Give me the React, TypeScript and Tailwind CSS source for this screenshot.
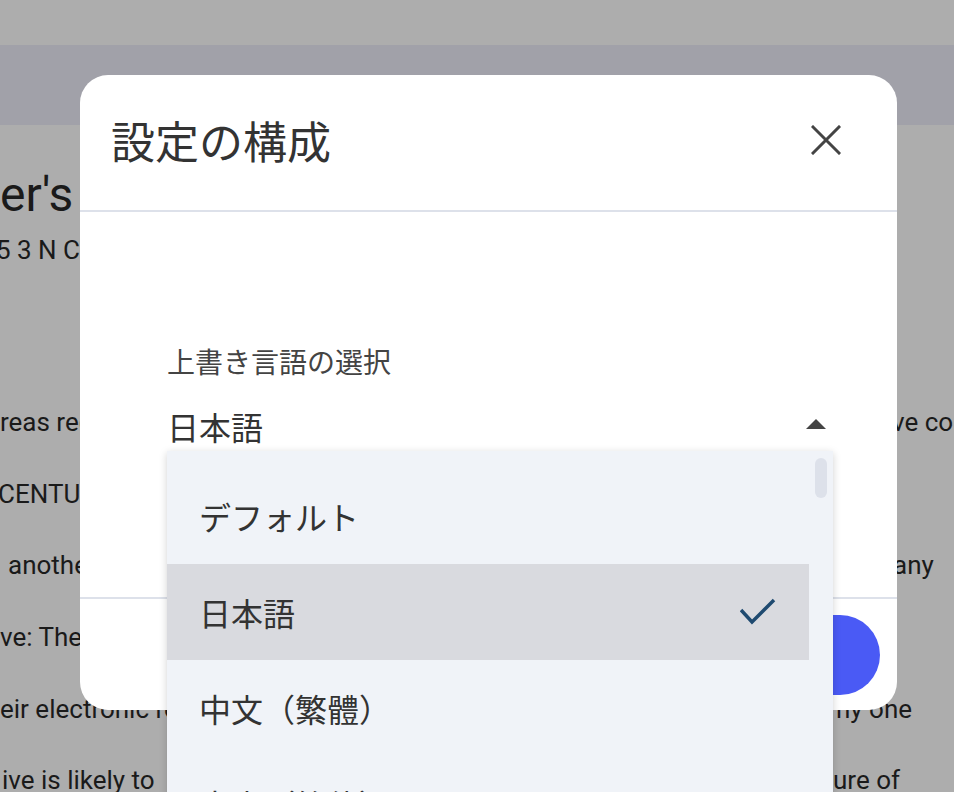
const cjk = { fontFamily: '"Noto Sans CJK JP", "Noto Sans", sans-serif' };

type Line = { left: string; leftPad?: string; rightAt?: string; right?: string };

const lines: Line[] = [
  { left: "reas requiring attention", right: "ve controls", rightAt: "w-[892px]" },
  { left: "CENTURY", leftPad: "-ml-[2px]" },
  { left: "another", leftPad: "pl-[8px]", right: "any", rightAt: "w-[893px]" },
  { left: "ve: The", },
  { left: "eir electronic records", right: "ny one", rightAt: "w-[836px]" },
  { left: "ive is likely to", leftPad: "pl-[2px]", right: "ure of", rightAt: "w-[833px]" },
];

function BackgroundPage() {
  return (
    <div className="flex flex-col text-[#1a1a1a]" style={{ fontFamily: "Roboto, Inter, sans-serif" }}>
      <div className="h-[45px] bg-[#adadad]" />
      <div className="h-[80px] bg-[#a1a1a9]" />
      <div className="flex flex-col bg-[#adadad]">
        <h1 className="mt-[42px] whitespace-nowrap text-[48px] leading-[56px]">er's</h1>
        <p className="-ml-[4px] mt-[11px] whitespace-nowrap text-[26px] leading-[32px]">5 3 N C</p>
        <div className="mt-[121px] flex flex-col">
          {lines.map((l, i) => (
            <div key={i} className="flex h-[71.6px] items-center whitespace-nowrap text-[26px]">
              <span className={`${l.rightAt ?? "w-[400px]"} shrink-0 overflow-hidden ${l.leftPad ?? ""}`}>{l.left}</span>
              {l.right && <span>{l.right}</span>}
            </div>
          ))}
        </div>
      </div>
    </div>
  );
}

function CloseIcon() {
  return (
    <svg width="30" height="30" viewBox="0 0 30 30" fill="none" stroke="#444" strokeWidth="3" strokeLinecap="square">
      <path d="M2 2 L28 28 M28 2 L2 28" />
    </svg>
  );
}

function CheckIcon() {
  return (
    <svg width="36" height="28" viewBox="0 0 36 28" fill="none" stroke="#1f4a70" strokeWidth="3.5">
      <path d="M1 12 L12 24 L34 2" />
    </svg>
  );
}

const options = ["デフォルト", "日本語", "中文（繁體）", "中文（简体）"];

function Dropdown() {
  return (
    <div className="absolute left-0 top-[45px] z-10 flex h-[400px] w-[666px] bg-[#f0f3f8] shadow-[0_2px_8px_rgba(0,0,0,0.18)]">
      <ul className="flex flex-1 flex-col pt-[17px]">
        {options.map((o) => {
          const sel = o === "日本語";
          return (
            <li
              key={o}
              className={`flex h-[96px] shrink-0 items-center justify-between pl-[32px] pr-[33px] text-[32px] text-[#333] ${sel ? "bg-[#d9dadf]" : ""}`}
            >
              <span>{o}</span>
              {sel && <CheckIcon />}
            </li>
          );
        })}
      </ul>
      <div className="w-[24px] px-[6px] pt-[7px]">
        <div className="h-[40px] rounded-full bg-[#dde1ea]" />
      </div>
    </div>
  );
}

function SettingsModal() {
  return (
    <div className="absolute left-[80px] top-[75px] flex w-[817px] flex-col rounded-[28px] bg-white" style={cjk}>
      <div className="flex h-[137px] items-center justify-between border-b-2 border-[#dde1ea] pb-[6px] pl-[31px] pr-[56px]">
        <h2 className="text-[44px] font-normal leading-none text-[#333]">設定の構成</h2>
        <CloseIcon />
      </div>
      <div className="h-[385px] pl-[87px] pr-[64px] pt-[132px]">
        <label className="block text-[28px] leading-[34px] text-[#444]">上書き言語の選択</label>
        <div className="relative mt-[28px]">
          <div className="flex h-[40px] items-center justify-between pr-[7px]">
            <span className="text-[32px] leading-[40px] text-[#333]">日本語</span>
            <span className="mt-[-4px] h-0 w-0 border-x-[10px] border-b-[10px] border-x-transparent border-b-[#444]" />
          </div>
          <Dropdown />
        </div>
      </div>
      <div className="flex h-[113px] justify-end border-t-2 border-[#dde1ea] pb-[15px] pr-[17px] pt-[16px]">
        <button className="h-[80px] w-[180px] rounded-full bg-[#4a5af5] text-[28px] text-white">保存</button>
      </div>
    </div>
  );
}

export default function App() {
  return (
    <div className="relative h-[792px] w-[954px] overflow-hidden bg-[#adadad]">
      <BackgroundPage />
      <SettingsModal />
    </div>
  );
}
